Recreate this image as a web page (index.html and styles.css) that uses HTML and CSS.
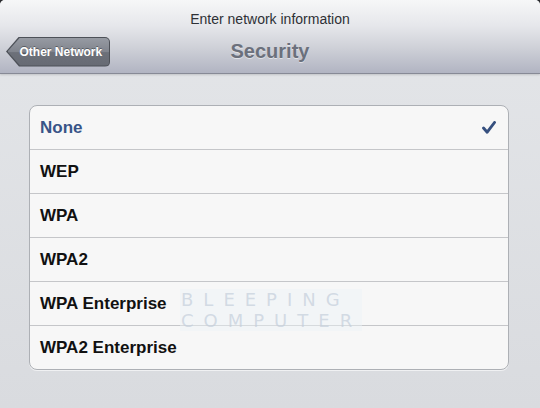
FILE: index.html
```html
<!DOCTYPE html>
<html>
<head>
<meta charset="utf-8">
<link rel="stylesheet" href="styles.css">
</head>
<body>
<div class="sheet">
  <header class="navbar">
    <div class="prompt">Enter network information</div>
    <div class="titlerow">
      <div class="back"><div class="back-inner">Other Network</div></div>
      <div class="title">Security</div>
    </div>
  </header>
  <main class="content">
    <ul class="table">
      <li class="row selected"><span>None</span>
        <svg class="check" width="14" height="13" viewBox="0 0 14 13"><path d="M1.5 7 L5.2 11.2 L12.5 1.5" fill="none" stroke="#36507f" stroke-width="2.9" stroke-linecap="round" stroke-linejoin="round"/></svg>
      </li>
      <li class="row"><span>WEP</span></li>
      <li class="row"><span>WPA</span></li>
      <li class="row"><span>WPA2</span></li>
      <li class="row"><span>WPA Enterprise</span></li>
      <li class="row"><span>WPA2 Enterprise</span></li>
    </ul>
    <div class="watermark"><div>BLEEPING</div><div>COMPUTER</div></div>
  </main>
</div>
</body>
</html>
```

FILE: styles.css
```css
html, body {
  margin: 0;
  padding: 0;
  background: #2a2b2e;
}
body {
  width: 540px;
  height: 408px;
  overflow: hidden;
  font-family: "Liberation Sans", Arial, sans-serif;
}
.sheet {
  width: 540px;
  height: 408px;
  border-radius: 5px 5px 0 0;
  overflow: hidden;
  background: linear-gradient(#e4e6e9, #d9dbdf);
  display: flex;
  flex-direction: column;
}
.navbar {
  height: 73px;
  border-bottom: 1px solid #878a96;
  background: linear-gradient(#f6f7f8 0%, #e6e7eb 35%, #cfd1d8 65%, #b1b4c2 100%);
  box-shadow: 0 1px 2px rgba(0,0,0,0.15);
  display: flex;
  flex-direction: column;
  position: relative;
  z-index: 1;
}
.prompt {
  text-align: center;
  font-size: 14px;
  color: #2e3136;
  padding-top: 11px;
  line-height: 16px;
  height: 16px;
}
.titlerow {
  margin-top: 10px;
  height: 29px;
  display: flex;
  align-items: center;
  padding-left: 6px;
  position: relative;
}
.back {
  width: 104px;
  height: 30px;
  background: #4d5158;
  clip-path: polygon(13px 0, 100% 0, 100% 100%, 13px 100%, 0 50%);
  border-radius: 0 5px 5px 0;
  position: relative;
}
.back-inner {
  position: absolute;
  inset: 1px 1px 1px 1.5px;
  background: linear-gradient(#979ba3 0%, #80848d 50%, #6c7079 52%, #676b74 100%);
  clip-path: polygon(12.5px 0, 100% 0, 100% 100%, 12.5px 100%, 0 50%);
  border-radius: 0 4px 4px 0;
  color: #fff;
  font-weight: bold;
  font-size: 12px;
  line-height: 28px;
  padding-left: 12px;
  text-shadow: 0 -1px 0 rgba(0,0,0,0.35);
}
.title {
  position: absolute;
  left: 0;
  right: 0;
  top: 0;
  text-align: center;
  font-size: 20px;
  font-weight: bold;
  color: #6b707c;
  line-height: 29px;
  text-shadow: 0 1px 0 rgba(255,255,255,0.5);
  pointer-events: none;
}
.content {
  flex: 1;
  position: relative;
  padding: 31px 31px 0 29px;
}
.table {
  list-style: none;
  margin: 0;
  padding: 0;
  background: #f7f7f7;
  border: 1px solid #adb0b5;
  border-radius: 8px;
  box-shadow: 0 1px 0 rgba(255,255,255,0.6);
}
.row {
  height: 43px;
  display: flex;
  align-items: center;
  justify-content: space-between;
  padding: 0 11px 0 10px;
  border-top: 1px solid #c5c6c9;
  font-size: 17px;
  font-weight: bold;
  color: #111;
}
.row:first-child {
  border-top: none;
}
.row.selected {
  color: #385487;
}
.check {
  margin-right: 1px;
  margin-top: -1px;
}
.watermark {
  position: absolute;
  left: 180px;
  top: 215px;
  width: 182px;
  height: 42px;
  background: rgba(236, 241, 247, 0.45);
  font-family: "DejaVu Sans", sans-serif;
  font-size: 18px;
  line-height: 21px;
  letter-spacing: 10px;
  color: rgba(196, 206, 219, 0.7);
  text-align: left;
  padding-left: 1px;
  box-sizing: border-box;
}
```
